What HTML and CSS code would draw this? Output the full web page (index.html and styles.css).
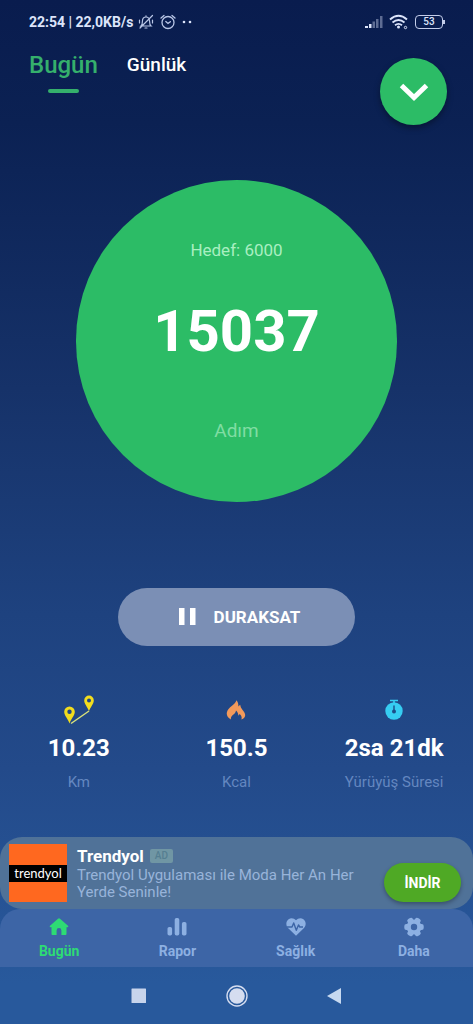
FILE: index.html
```html
<!DOCTYPE html>
<html lang="tr">
<head>
<meta charset="utf-8">
<meta name="viewport" content="width=device-width, initial-scale=1">
<title>Adım Sayar</title>
<link rel="stylesheet" href="styles.css">
</head>
<body>
<div class="app">
  <div class="status">
    <span class="status-text">22:54 | 22,0KB/s</span>
    <svg class="status-icon" width="16" height="16" viewBox="0 0 16 16" fill="none" stroke="currentColor" stroke-width="1.200" stroke-linecap="round"><path d="M3 12h10c-1.200-1-1.400-2.400-1.400-4.500C11.600 4.500 10 3 8 3S4.400 4.500 4.400 7.500C4.400 9.600 4.200 11 3 12zM7 14h2M8 3V1.800M2 14L14.500 1.500M1.500 6v3M14.500 6v3"/></svg>
    <svg class="status-icon" width="16" height="16" viewBox="0 0 16 16" fill="none" stroke="currentColor" stroke-width="1.300" stroke-linecap="round"><circle cx="8" cy="8.500" r="6"/><path d="M5.800 7.500L8 9.400l2.400-1.700M1 4l3-2.500M15 4l-3-2.500"/></svg>
    <svg width="12" height="4" viewBox="0 0 12 4" fill="currentColor"><circle cx="2" cy="2" r="1.300"/><circle cx="8" cy="2" r="1.300"/></svg>
    <div class="status-right">
      <svg width="18" height="14" viewBox="0 0 18 14" fill="currentColor"><path d="M0 11h3v2H0zM4 9h2.500v4H4z"/><path opacity=".4" d="M7.500 6.500H10V13H7.500zM11 4h2.500v9H11zM15 1h2.500v12H15z"/></svg>
      <svg width="20" height="16" viewBox="0 0 20 16" fill="none" stroke="currentColor" stroke-width="1.900"><path d="M1 5.500Q9.500-2 18 5.500M3.500 8.500Q9.500 3.500 15.500 8.500M6 11.200q3.500-2.600 7 0"/><circle cx="9.500" cy="13" r="1.500" fill="currentColor" stroke="none"/><circle cx="16.500" cy="13.500" r="1.200" stroke-width="1"/></svg>
      <span class="battery">53</span>
    </div>
  </div>

  <header class="top">
    <nav class="tabs">
      <a class="tab tab-active" href="#bugun">Bugün</a>
      <a class="tab" href="#gunluk">Günlük</a>
    </nav>
    <button class="more" type="button" aria-label="Aç">
      <svg width="30" height="20" viewBox="0 0 30 20" fill="none" stroke="#fff" stroke-width="5"><path d="M2.500 3.500L15 15.500 27.500 3.500"/></svg>
    </button>
  </header>

  <main class="main">
    <section class="ring">
      <p class="goal">Hedef: 6000</p>
      <p class="steps">15037</p>
      <p class="unit">Adım</p>
    </section>
    <button class="pause" type="button">
      <svg width="17" height="17" viewBox="0 0 17 17" fill="#fff"><path d="M0 0h5.500v17H0zM11 0h5.500v17H11z"/></svg>
      DURAKSAT
    </button>
    <section class="stats">
      <div class="stat">
        <svg width="32" height="30" viewBox="0 0 32 30"><path d="M8 28.500L26 16" stroke="#d9e27a" stroke-width="1.500"/><g fill="#f2dd1e"><path fill-rule="evenodd" d="M6.500 28.500C5 24 1.200 20.500 1.200 16.800a5.300 5.300 0 0 1 10.600 0C11.800 20.500 8 24 6.500 28.500zM6.500 14.500a2.200 2.200 0 1 0 0 4.400 2.200 2.200 0 0 0 0-4.400z"/><path fill-rule="evenodd" d="M26 16C24.600 12 21.200 8.800 21.200 5.400a4.800 4.800 0 0 1 9.600 0C30.800 8.800 27.400 12 26 16zM26 3.400a2 2 0 1 0 0 4 2 2 0 0 0 0-4z"/></g></svg>
        <strong class="value">10.23</strong>
        <span class="label">Km</span>
      </div>
      <div class="stat">
        <svg width="20" height="30" viewBox="0 0 20 30"><path fill="#f39a5b" d="M5 24.500C2 23 .4 20.600.8 17.700 1.200 14.500 3.400 13 6 10.700 8 9 9.800 7.500 10.500 5.300c1.500 1.700 2 3.800 1.800 6.200l1.900-1.700c.4 2 .8 3.300 2.400 5.200 3.800 4.400 3.400 7.700-1.200 9.500.6-2.300.1-3.600-1.700-5.400l-1.300 1.600c-.2-2.400-.9-3.900-2.400-5.200-.3 2-1.100 2.900-2.600 4C5.300 21 4.600 22.500 5 24.500z"/></svg>
        <strong class="value">150.5</strong>
        <span class="label">Kcal</span>
      </div>
      <div class="stat">
        <svg width="20" height="30" viewBox="0 0 20 30"><path d="M6 5.500h8M10 5.500v4" stroke="#36cdf2" stroke-width="1.600" fill="none"/><circle cx="10" cy="16" r="8.700" fill="#36cdf2"/><path d="M10 10.500v6" stroke="#1c4d88" stroke-width="1.400"/><circle cx="10" cy="16.500" r="2" fill="#1c4d88"/></svg>
        <strong class="value">2sa 21dk</strong>
        <span class="label">Yürüyüş Süresi</span>
      </div>
    </section>
  </main>

  <aside class="ad">
    <div class="brand"><span class="brand-name">trendyol</span></div>
    <div class="ad-body">
      <div class="ad-head"><strong>Trendyol</strong><span class="ad-tag">AD</span></div>
      <p class="ad-text">Trendyol Uygulaması ile Moda Her An Her Yerde Seninle!</p>
    </div>
    <button class="install" type="button">İNDİR</button>
  </aside>

  <nav class="bottom">
    <a class="item item-active" href="#bugun">
      <svg width="20" height="20" viewBox="0 0 20 20" fill="currentColor"><path d="M9 1.700a1.500 1.500 0 0 1 2 0l8 7.100c.6.700.3 1.400-.6 1.400h-.9v6.600c0 .8-.4 1.200-1.200 1.200h-3.900v-4.500a2.400 2.400 0 0 0-4.800 0V18H3.700c-.8 0-1.200-.4-1.200-1.200v-6.600h-.9c-.9 0-1.200-.7-.6-1.400z"/></svg>
      Bugün</a>
    <a class="item" href="#rapor">
      <svg width="20" height="20" viewBox="0 0 20 20" fill="currentColor"><rect x=".5" y="10" width="4.600" height="8.500" rx="1.800"/><rect x="7.700" y="1" width="4.600" height="17.500" rx="1.800"/><rect x="14.900" y="5" width="4.600" height="13.500" rx="1.800"/></svg>
      Rapor</a>
    <a class="item" href="#saglik">
      <svg width="20" height="20" viewBox="0 0 20 20" fill="currentColor"><path d="M10 18.800L2 11C-.5 8.300-.1 4.300 2.600 2.300 5 .6 8 1.100 10 3.300c2-2.200 5-2.700 7.400-1 2.700 2 3.100 6 .6 8.700z"/><path d="M1 10h5l1.700-4 2.600 7.300L12.500 8l1.300 2H17" fill="none" stroke="#3d65a6" stroke-width="1.400" stroke-linejoin="round"/></svg>
      Sağlık</a>
    <a class="item" href="#daha">
      <svg width="20" height="20" viewBox="0 0 20 20" fill="currentColor"><circle cx="10" cy="10" r="7.500"/><rect x=".3" y="7" width="19.400" height="6" rx="2"/><rect x=".3" y="7" width="19.400" height="6" rx="2" transform="rotate(60 10 10)"/><rect x=".3" y="7" width="19.400" height="6" rx="2" transform="rotate(120 10 10)"/><circle cx="10" cy="10" r="3.200" fill="#3d65a6"/></svg>
      Daha</a>
  </nav>

  <div class="system">
    <button class="key" type="button" aria-label="Son uygulamalar"><svg width="16" height="16" viewBox="0 0 16 16"><rect x=".5" y=".5" width="14.500" height="14.500" rx=".5" fill="#c7d4ec"/></svg></button>
    <button class="key" type="button" aria-label="Ana ekran"><svg width="22" height="22" viewBox="0 0 22 22"><circle cx="11" cy="11" r="10" fill="none" stroke="#d5ddf0" stroke-width="1.400"/><circle cx="11" cy="11" r="7.800" fill="#d5ddf0"/></svg></button>
    <button class="key" type="button" aria-label="Geri"><svg width="16" height="16" viewBox="0 0 16 16"><path d="M14 0v16L0 8z" fill="#c7d9f0"/></svg></button>
  </div>
</div>
</body>
</html>
```
FILE: styles.css
```css
* {
  box-sizing: border-box;
}

body {
  margin: 0;
  font-family: Roboto, "Noto Sans", sans-serif;
  color: #fff;
}

p {
  margin: 0;
}

a {
  color: inherit;
  text-decoration: none;
}

button {
  padding: 0;
  border: 0;
  font: inherit;
  color: inherit;
  background: none;
}

svg {
  display: block;
  flex: none;
}

.app {
  display: flex;
  flex-direction: column;
  min-height: 100vh;
  background: linear-gradient(#091c4e 0%, #0b2153 12%, #163269 38%, #1e427f 60%, #234a8a 75%, #28599c 96%);
}

.status {
  display: flex;
  align-items: center;
  gap: 5px;
  height: 44px;
  padding: 0 30px 0 29px;
  color: #dce4fa;
}

.status-text {
  font-size: 14px;
  font-weight: 700;
}

.status-icon {
  margin-right: 1px;
  color: #b9c6e6;
}

.status-right {
  display: flex;
  align-items: center;
  gap: 6px;
  margin-left: auto;
}

.battery {
  position: relative;
  width: 28px;
  border: 1px solid #c3cdea;
  border-radius: 4px;
  font-size: 10px;
  font-weight: 500;
  line-height: 12px;
  text-align: center;
}

.battery::after {
  content: "";
  position: absolute;
  top: 4px;
  right: -3px;
  width: 2px;
  height: 4px;
  background: #c3cdea;
}

.top {
  display: flex;
  justify-content: space-between;
  align-items: flex-start;
  padding: 6px 26px 0 29px;
}

.tabs {
  display: flex;
  align-items: flex-start;
  gap: 29px;
}

.tab {
  font-size: 19px;
  font-weight: 500;
  line-height: 30px;
}

.tab-active {
  display: flex;
  flex-direction: column;
  align-items: center;
  gap: 9px;
  font-size: 24px;
  color: #35b06c;
}

.tab-active::after {
  content: "";
  width: 31px;
  height: 4px;
  border-radius: 2px;
  background: #35b06c;
}

.more {
  display: grid;
  place-items: center;
  width: 67px;
  height: 67px;
  margin-top: 8px;
  border-radius: 50%;
  background: #2cbc66;
  box-shadow: 0 3px 6px rgba(0, 0, 0, 0.35);
}

.main {
  display: flex;
  flex: 1;
  flex-direction: column;
  align-items: center;
  padding-top: 55px;
}

.ring {
  display: flex;
  flex-direction: column;
  align-items: center;
  width: 68%;
  aspect-ratio: 1;
  padding-top: 60px;
  border-radius: 50%;
  background: #2cbc66;
}

.goal {
  font-size: 17px;
  line-height: 20px;
  color: #a9efc1;
}

.steps {
  margin-top: 36px;
  font-size: 58px;
  font-weight: 700;
  line-height: 70px;
}

.unit {
  margin-top: 53px;
  font-size: 19px;
  line-height: 24px;
  color: #80dda3;
}

.pause {
  display: flex;
  justify-content: center;
  align-items: center;
  gap: 18px;
  width: 50%;
  height: 58px;
  margin-top: 86px;
  padding-left: 6px;
  border-radius: 29px;
  background: #7b8fb5;
  font-size: 17px;
  font-weight: 700;
}

.stats {
  display: grid;
  grid-template-columns: repeat(3, 1fr);
  width: 100%;
  margin-top: 49px;
}

.stat {
  display: flex;
  flex-direction: column;
  align-items: center;
}

.value {
  margin-top: 7px;
  font-size: 24px;
  font-weight: 700;
  line-height: 32px;
}

.label {
  margin-top: 9px;
  font-size: 15px;
  line-height: 18px;
  color: #6487c0;
}

.ad {
  display: flex;
  align-items: center;
  gap: 10px;
  padding: 7px 12px 7px 9px;
  border-radius: 22px;
  background: #507298;
}

.brand {
  display: grid;
  place-items: center;
  flex: none;
  width: 58px;
  height: 58px;
  background: #ff681f;
}

.brand-name {
  width: 100%;
  font-family: Lato, sans-serif;
  font-size: 13px;
  line-height: 17px;
  text-align: center;
  background: #000;
}

.ad-body {
  flex: 1;
}

.ad-head {
  display: flex;
  align-items: center;
  gap: 6px;
  font-size: 17px;
  line-height: 22px;
}

.ad-tag {
  padding: 0 5px;
  border-radius: 2px;
  font-size: 10px;
  font-weight: 500;
  line-height: 14px;
  color: #557e91;
  background: #7096a4;
}

.ad-text {
  font-size: 15px;
  line-height: 17px;
  color: #98b4da;
}

.install {
  flex: none;
  align-self: flex-end;
  width: 77px;
  height: 39px;
  border-radius: 20px;
  background: #4fa925;
  box-shadow: 0 2px 4px rgba(0, 0, 0, 0.3);
  font-size: 14px;
  font-weight: 700;
}

.bottom {
  display: grid;
  grid-template-columns: repeat(4, 1fr);
  padding: 8px 0 7px;
  border-radius: 20px 20px 0 0;
  background: #3d65a6;
}

.item {
  display: flex;
  flex-direction: column;
  align-items: center;
  gap: 5px;
  font-size: 14px;
  font-weight: 700;
  line-height: 18px;
  color: #8db0e2;
}

.item-active {
  color: #2edb74;
}

.system {
  display: flex;
  justify-content: center;
  align-items: center;
  gap: 54px;
  height: 57px;
}

.key {
  display: grid;
  place-items: center;
  width: 44px;
  height: 44px;
}
```
